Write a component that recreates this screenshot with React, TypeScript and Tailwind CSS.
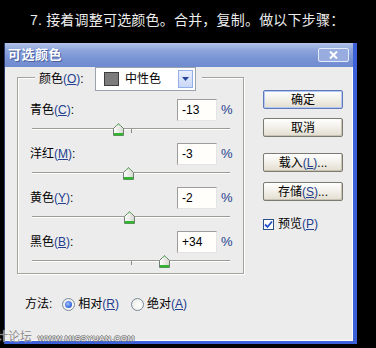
import React from "react";

const FONT = "font-['Liberation_Sans','Noto_Sans_CJK_SC',sans-serif]";

function Acc({ k }: { k: string }) {
  return (
    <span className="text-[#23408e]">
      (<span className="underline underline-offset-[1px]">{k}</span>)
    </span>
  );
}

function Thumb() {
  return (
    <svg width="11" height="13" viewBox="0 0 11 13">
      <defs>
        <linearGradient id="tg" x1="0" y1="0" x2="1" y2="0">
          <stop offset="0" stopColor="#ffffff" />
          <stop offset="1" stopColor="#d6d6d0" />
        </linearGradient>
      </defs>
      <path d="M0.5 5.5 L5.5 0.5 L10.5 5.5 V12.5 H0.5 Z" fill="url(#tg)" stroke="#6f7f6f" />
      <path d="M3.5 3 L5.5 1 L7.5 3" fill="none" stroke="#7fd27f" />
      <rect x="1" y="10" width="9" height="2.5" fill="#33b533" />
    </svg>
  );
}

function SliderRow({ label, k, value }: { label: string; k: string; value: number }) {
  const center = 99 + value * 0.99;
  return (
    <div className="h-[44px]">
      <div className="flex items-center h-[22px]">
        <div className="w-[159px] pl-[12px] text-[12px] leading-[14px] text-black">
          {label}
          <Acc k={k} />:
        </div>
        <div className="w-[40px] h-[22px] bg-[#fffefa] border border-[#9c9c9c] border-r-[#e4e4e4] border-b-[#e4e4e4] flex items-center pl-[4px] text-[12px] text-black">
          {value > 0 ? `+${value}` : `${value}`}
        </div>
        <div className="ml-[4px] text-[13px] text-[#23408e]">%</div>
      </div>
      <div className="relative h-[22px]">
        <div className="absolute left-[14px] top-[7px] w-[198px] h-[2px] border-t border-[#9c9a94] border-b border-b-white" />
        <div className="absolute left-[113px] top-[8px] w-px h-[4px] bg-[#8a8a8a]" />
        <div className="absolute top-[2px]" style={{ left: `${14 + center - 5.5}px` }}>
          <Thumb />
        </div>
      </div>
    </div>
  );
}

function Btn({ children, def }: { children: React.ReactNode; def?: boolean }) {
  return (
    <div
      className={`w-[80px] h-[19px] rounded-[2px] border flex items-center justify-center text-[12px] leading-[14px] text-black bg-[linear-gradient(to_bottom,#ffffff_0%,#f3f1ea_45%,#e2ddd0_100%)] ${
        def
          ? "border-[#5e78b8] shadow-[inset_0_0_0_1px_#b4c9f2]"
          : "border-[#7d7a72] shadow-[inset_-1px_-1px_0_#c9c3b4]"
      }`}
    >
      {children}
    </div>
  );
}

function Radio({ checked }: { checked?: boolean }) {
  return (
    <div className="w-[13px] h-[13px] rounded-full border border-[#7a8a9a] bg-[radial-gradient(circle_at_60%_60%,#ffffff_0%,#e6e6e0_100%)] flex items-center justify-center">
      {checked && (
        <div className="w-[7px] h-[7px] rounded-full bg-[radial-gradient(circle_at_40%_40%,#9fc0ff_0%,#2f62d8_70%,#1c45b0_100%)]" />
      )}
    </div>
  );
}

export default function App() {
  return (
    <div className={`relative w-[376px] h-[348px] bg-black overflow-hidden ${FONT}`}>
      <div className="h-[43px] pl-[30px] pt-[11px] text-[14px] leading-[18px] text-[#ececec] whitespace-nowrap tracking-[0.2px]">
        7. 接着调整可选颜色。合并，复制。做以下步骤：
      </div>

      <div className="ml-[4px] w-[353px] h-[301px] flex flex-col border-l border-[#2a3a6a] border-r-[4px] border-r-[#3c60d8] border-b-[3px] border-b-[#3c60d8]">
        {/* title bar */}
        <div className="h-[24px] flex items-center pl-[3px] pr-[4px] bg-[linear-gradient(to_bottom,#b3c3ea_0%,#8ea5dc_30%,#7993d3_65%,#6f8bd0_100%)]">
          <div className="text-[13px] font-bold text-white tracking-[0.5px] [text-shadow:1px_1px_0_#4a5f9c]">可选颜色</div>
          <div className="ml-auto w-[31px] h-[14px] rounded-[2px] border border-[#e4ebfb] bg-[#98acdf] flex items-center justify-center">
            <svg width="9" height="8" viewBox="0 0 9 8">
              <path d="M1 0.5 L8 7.5 M8 0.5 L1 7.5" stroke="#ffffff" strokeWidth="2" />
            </svg>
          </div>
        </div>

        {/* body */}
        <div className="flex-1 flex bg-[#ececec] border-r border-b border-white">
          {/* left column */}
          <div className="pl-[12px] pt-[10px]">
            <div className="w-[227px] h-[197px] border border-[#a3a29c] shadow-[inset_1px_1px_0_#ffffff,1px_1px_0_#ffffff]">
              <div className="-mt-[11px] ml-[17px] h-[23px] flex">
                <div className="flex items-center bg-[#ececec] pl-[4px] pr-[6px]">
                  <div className="w-[56px] text-[12px] leading-[14px] text-black">
                    颜色
                    <Acc k="O" />:
                  </div>
                  <div className="w-[101px] h-[24px] bg-white border border-[#9aa3ae] flex items-center p-[2px]">
                    <div className="ml-[6px] w-[15px] h-[14px] bg-[#7c7c7c] border border-[#3e3e3e]" />
                    <div className="ml-[6px] text-[12px] text-black">中性色</div>
                    <div className="ml-auto w-[15px] h-full bg-[linear-gradient(to_bottom,#e8eefc,#c9d7f7)] border border-[#94aee8] flex items-center justify-center">
                      <svg width="7" height="4" viewBox="0 0 7 4">
                        <path d="M0 0 H7 L3.5 4 Z" fill="#27459a" />
                      </svg>
                    </div>
                  </div>
                </div>
              </div>
              <div className="mt-[9px]">
                <SliderRow label="青色" k="C" value={-13} />
                <SliderRow label="洋红" k="M" value={-3} />
                <SliderRow label="黄色" k="Y" value={-2} />
                <SliderRow label="黑色" k="B" value={34} />
              </div>
            </div>

            <div className="mt-[22px] ml-[8px] h-[16px] flex items-center text-[12px] leading-[14px] text-black">
              <span>方法:</span>
              <div className="ml-[10px]">
                <Radio checked />
              </div>
              <span className="ml-[3px]">
                相对
                <Acc k="R" />
              </span>
              <div className="ml-[12px]">
                <Radio />
              </div>
              <span className="ml-[3px]">
                绝对
                <Acc k="A" />
              </span>
            </div>
          </div>

          {/* right column */}
          <div className="ml-[19px] pt-[23px] flex flex-col">
            <Btn def>确定</Btn>
            <div className="mt-[9px]">
              <Btn>取消</Btn>
            </div>
            <div className="mt-[16px]">
              <Btn>
                载入
                <Acc k="L" />
                ...
              </Btn>
            </div>
            <div className="mt-[10px]">
              <Btn>
                存储
                <Acc k="S" />
                ...
              </Btn>
            </div>
            <div className="mt-[16px] flex items-center">
              <div className="w-[11px] h-[11px] bg-white border border-[#2a4f86] flex items-center justify-center">
                <svg width="9" height="9" viewBox="0 0 9 9">
                  <path d="M1 4.5 L3.5 7 L8 1.5" fill="none" stroke="#2050c8" strokeWidth="1.8" />
                </svg>
              </div>
              <span className="ml-[4px] text-[12px] leading-[14px] text-black">
                预览
                <Acc k="P" />
              </span>
            </div>
          </div>
        </div>
      </div>

      {/* watermark */}
      <div className="absolute left-[-4px] top-[330px] flex items-end whitespace-nowrap">
        <span className="text-[12px] leading-[14px] text-[#8c8c8c] [text-shadow:0_0_1px_#ffffff]">计论坛</span>
        <span className="ml-[6px] mb-[1px] text-[8px] leading-[8px] tracking-[0.6px] text-[#f6f6f6] [text-shadow:1px_0_0_#777,-1px_0_0_#777,0_1px_0_#777,0_-1px_0_#777]">
          WWW.MISSYUAN.COM
        </span>
      </div>
    </div>
  );
}
